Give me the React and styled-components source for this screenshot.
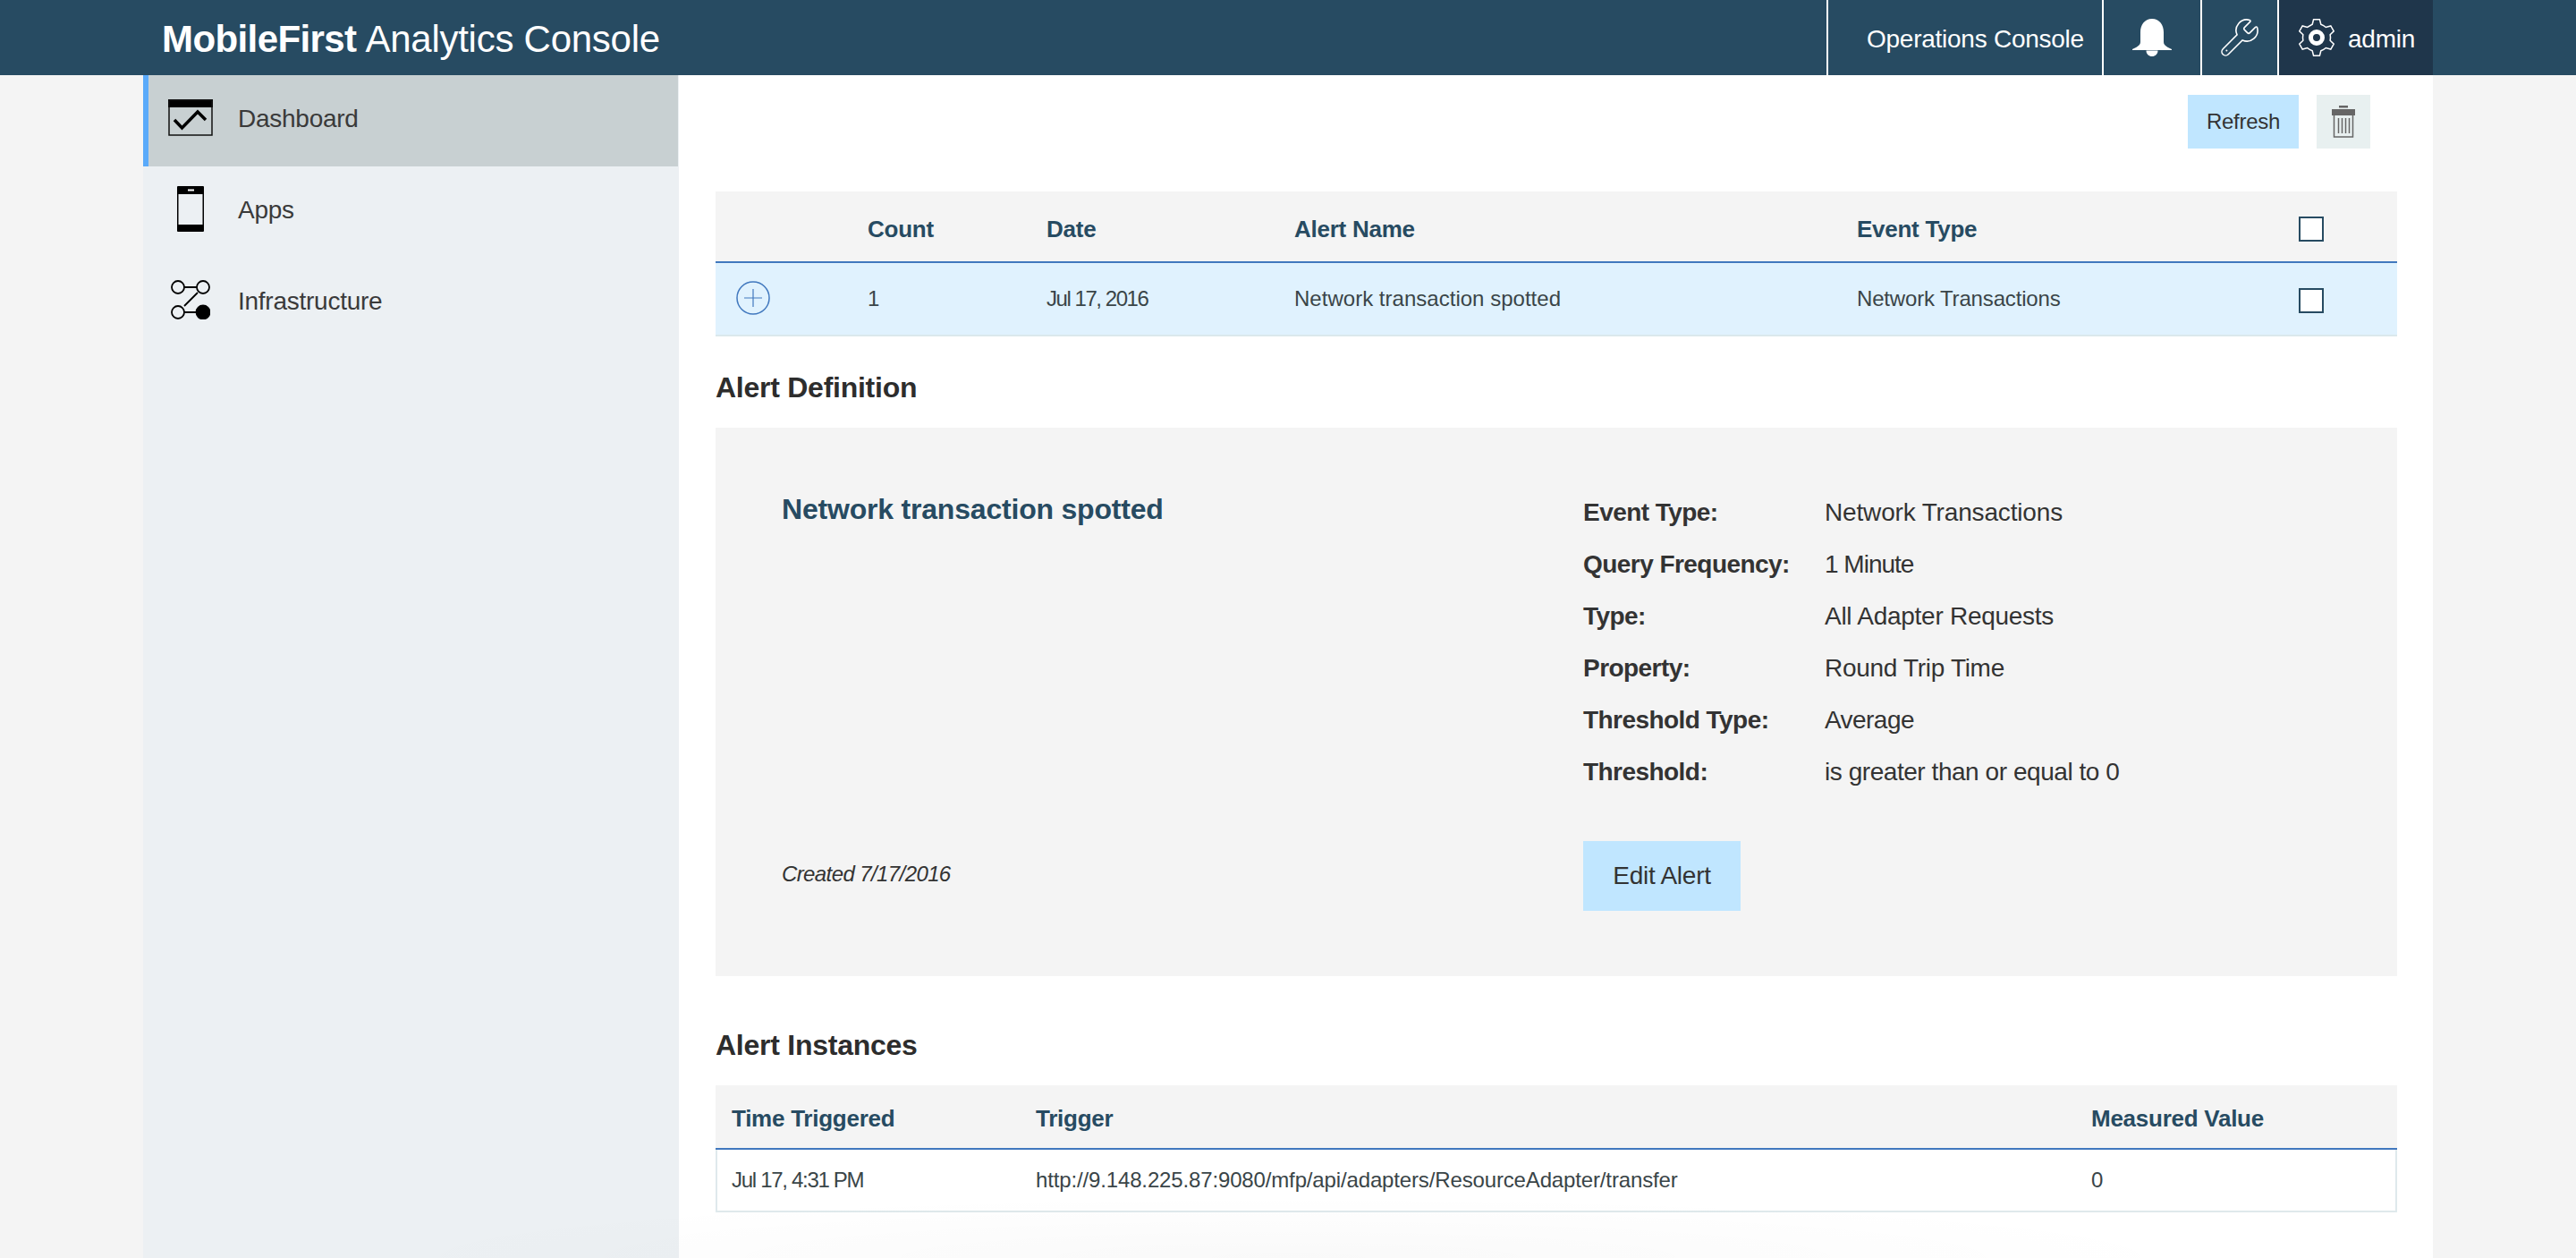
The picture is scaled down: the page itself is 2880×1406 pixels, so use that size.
import React from "react";
import styled, { createGlobalStyle } from "styled-components";

const GlobalStyle = createGlobalStyle`
  html, body { margin: 0; padding: 0; background: #f4f4f4; }
  body {
    font-family: "Liberation Sans", Arial, sans-serif;
    color: #333;
    letter-spacing: -0.256px;
  }
  * { box-sizing: border-box; }
`;

const Page = styled.div`
  height: 1406px;
  overflow: hidden;
  position: relative;
  &::after {
    content: "";
    position: absolute;
    left: 400px;
    right: 400px;
    bottom: 0;
    height: 70px;
    background: radial-gradient(ellipse 1040px 70px at 50% 100%, rgba(0, 0, 0, 0.022), rgba(0, 0, 0, 0));
    pointer-events: none;
  }
`;

const Header = styled.header`
  height: 84px;
  background: #274b62;
`;
const HeaderInner = styled.div`
  width: 2560px;
  height: 100%;
  margin: 0 auto;
  display: flex;
  align-items: stretch;
`;
const Brand = styled.div`
  flex: 1;
  padding: 4px 0 0 21px;
  display: flex;
  align-items: center;
  color: #fff;
  font-size: 42px;
  white-space: pre;
  b { font-weight: 700; letter-spacing: -0.6px; margin-right: 10px; }
`;
const HeaderCell = styled.div`
  display: flex;
  align-items: center;
  justify-content: center;
  border-left: 2px solid #fff;
  color: #fff;
  font-size: 28px;
  width: ${(p) => p.$w}px;
`;
const OpsCell = styled(HeaderCell)`
  justify-content: flex-start;
  padding-left: 43px;
`;
const UserCell = styled(HeaderCell)`
  justify-content: flex-start;
  padding-left: 21px;
  gap: 14px;
  background: #1f364b;
`;
const HeaderText = styled.span`
  margin-top: 4px;
`;

const Shell = styled.div`
  width: 2560px;
  margin: 0 auto;
  display: flex;
  height: 1322px;
  background: #fff;
`;

const Sidebar = styled.nav`
  width: 599px;
  flex-shrink: 0;
  background: #ecf0f3;
`;
const NavItem = styled.div`
  height: 102px;
  margin-right: 1px;
  padding: 0 0 8px 17px;
  display: flex;
  align-items: center;
  font-size: 28px;
  color: #3a3a3a;
  border-left: 6px solid ${(p) => (p.$active ? "#5aaafa" : "transparent")};
  background: ${(p) => (p.$active ? "#c8d0d2" : "transparent")};
`;
const NavIcon = styled.span`
  width: 60px;
  margin-right: 23px;
  display: flex;
  justify-content: center;
`;
const NavLabel = styled.span`
  margin-top: 4px;
`;

const Main = styled.main`
  flex: 1;
  padding: 22px 40px 0 41px;
`;
const Toolbar = styled.div`
  display: flex;
  justify-content: flex-end;
  gap: 20px;
  padding-right: 30px;
  margin-bottom: 48px;
`;
const Button = styled.button`
  border: 0;
  background: #c0e6ff;
  color: #333;
  font-family: inherit;
  letter-spacing: inherit;
  font-size: ${(p) => p.$size || 24}px;
  height: ${(p) => p.$h || 60}px;
  width: ${(p) => p.$w || 124}px;
  padding: 0;
`;
const IconButton = styled(Button)`
  background: #e8f0f0;
  width: 60px;
  display: flex;
  align-items: center;
  justify-content: center;
`;

const AlertRow = styled.div`
  display: grid;
  grid-template-columns: 170px 200px 277px 629px 494px 1fr;
  align-items: center;
  font-size: 24px;
  height: ${(p) => p.$h}px;
`;
const AlertHead = styled(AlertRow)`
  background: #f4f4f4;
  border-bottom: 2px solid #4178be;
  color: #274b62;
  font-weight: 700;
  font-size: 26px;
  padding-top: 6px;
`;
const AlertBody = styled(AlertRow)`
  background: #e0f2fe;
  border-bottom: 2px solid #dbe8ec;
  color: #3a4548;
`;
const Cell = styled.span`
  letter-spacing: ${(p) => p.$track ?? -0.38}px;
`;
const Check = styled.span`
  display: block;
  width: 28px;
  height: 28px;
  background: #fff;
  border: 2px solid #274b62;
`;
const RowCheck = styled(Check)`
  margin-top: 4px;
`;
const PlusCell = styled.span`
  display: flex;
  padding-left: 23px;
  margin-bottom: 2px;
`;

const SectionTitle = styled.h2`
  margin: 0;
  font-size: 32px;
  font-weight: 700;
  color: #2d2d2d;
  line-height: 38px;
  padding-top: ${(p) => p.$top}px;
  padding-bottom: ${(p) => p.$bottom}px;
`;

const Panel = styled.section`
  height: 613px;
  background: #f4f4f4;
  padding: 68px 0 0 74px;
  display: grid;
  grid-template-columns: 896px 1fr;
  grid-template-rows: 394px 78px;
`;
const PanelTitle = styled.h3`
  margin: 0;
  padding-top: 1px;
  font-size: 32px;
  line-height: 44px;
  color: #274b62;
  font-weight: 700;
  letter-spacing: -0.2px;
`;
const Details = styled.dl`
  margin: -2px 0 0;
  display: grid;
  grid-template-columns: 270px 1fr;
  grid-auto-rows: 58px;
  font-size: 28px;
  line-height: 58px;
  color: #333;
  align-content: start;
`;
const DetailLabel = styled.dt`
  font-weight: 700;
  letter-spacing: -0.55px;
`;
const DetailValue = styled.dd`
  margin: 0;
  letter-spacing: ${(p) => p.$track}px;
`;
const Created = styled.div`
  font-size: 24px;
  font-style: italic;
  align-self: center;
  color: #333;
  letter-spacing: -0.6px;
  margin-bottom: 4px;
`;

const InstanceRow = styled.div`
  display: grid;
  grid-template-columns: 340px 1180px 1fr;
  align-items: center;
  padding-left: 18px;
  font-size: 24px;
`;
const InstanceHead = styled(InstanceRow)`
  height: 72px;
  padding-top: 4px;
  background: #f4f4f4;
  border-bottom: 2px solid #4178be;
  color: #274b62;
  font-weight: 700;
  font-size: 26px;
`;
const InstanceBody = styled(InstanceRow)`
  height: 70px;
  padding-left: 16px;
  border: 2px solid #dfe9ec;
  border-top: 0;
  color: #3a4548;
`;

function gearPath(cx, cy, rOut, rIn, teeth) {
  const step = (Math.PI * 2) / teeth;
  let d = "";
  for (let i = 0; i < teeth; i++) {
    const a = -Math.PI / 2 + i * step;
    const pts = [
      [rIn, a - step * 0.3],
      [rOut, a - step * 0.16],
      [rOut, a + step * 0.16],
      [rIn, a + step * 0.3],
    ];
    pts.forEach(([r, t], j) => {
      const x = (cx + r * Math.cos(t)).toFixed(2);
      const y = (cy + r * Math.sin(t)).toFixed(2);
      if (i === 0 && j === 0) d += `M${x} ${y}`;
      else if (j === 0) d += `A${rIn} ${rIn} 0 0 1 ${x} ${y}`;
      else d += `L${x} ${y}`;
    });
  }
  return d + "Z";
}

const BellIcon = () => (
  <svg width="44" height="42" viewBox="0 0 44 42">
    <path
      fill="#fff"
      d="M22 0C13.500 0 9 7 9 15V26C9 30 4 32 0 34V35H44V34C40 32 35 30 35 26V15C35 7 30.500 0 22 0ZM15.500 35.500C15.500 39.500 18.500 42 22 42S28.500 39.500 28.500 35.500Z"
    />
  </svg>
);

const WrenchIcon = () => (
  <svg width="42" height="42" viewBox="1.500 1.500 21 21" fill="none" stroke="#fff" strokeWidth="0.8">
    <path d="M14.700 6.300a1 1 0 0 0 0 1.400l1.600 1.600a1 1 0 0 0 1.400 0l3.106-3.105c.32-.322.863-.22.983.218a6 6 0 0 1-8.259 7.057l-7.910 7.910a1 1 0 0 1-3-3l7.910-7.910a6 6 0 0 1 7.057-8.259c.438.12.54.662.219.984z" />
    <circle cx="4.700" cy="19.300" r="0.500" fill="#fff" stroke="none" />
  </svg>
);

const GearIcon = () => (
  <svg width="42" height="42" viewBox="0 0 42 42">
    <path d={gearPath(21, 21, 20.500, 15.500, 6)} fill="none" stroke="#fff" strokeWidth="1.500" />
    <circle cx="21" cy="21" r="6.500" fill="none" stroke="#fff" strokeWidth="5" />
  </svg>
);

const TrashIcon = () => (
  <svg width="26" height="36" viewBox="0 0 26 36">
    <path fill="#666" d="M8 0H18V2.500H8ZM0 4H26V11H0Z" />
    <path fill="none" stroke="#666" strokeWidth="1.500" d="M2.500 11V35H23.500V11" />
    <path fill="none" stroke="#666" strokeWidth="1.500" d="M7.500 14V31M11.500 14V31M15.500 14V31M19.500 14V31" />
  </svg>
);

const DashboardIcon = () => (
  <svg width="50" height="41" viewBox="0 0 50 41">
    <path d="M0 0H50V9H0Z" fill="#000" />
    <path d="M1 1H49V40H1Z" fill="none" stroke="#111" strokeWidth="1.500" />
    <path d="M7 23L15.500 32L33 14L42 23" fill="none" stroke="#000" strokeWidth="3.500" />
  </svg>
);

const PhoneIcon = () => (
  <svg width="30" height="51" viewBox="0 0 30 51">
    <path fill="#000" fillRule="evenodd" d="M1 0H29A1 1 0 0 1 30 1V50A1 1 0 0 1 29 51H1A1 1 0 0 1 0 50V1A1 1 0 0 1 1 0ZM1.500 9V43H28.500V9Z" />
    <rect x="12" y="3.500" width="7" height="2" fill="#fff" />
  </svg>
);

const NetworkIcon = () => (
  <svg width="44" height="44" viewBox="0 0 44 44" fill="none" stroke="#000" strokeWidth="1.800">
    <circle cx="8" cy="8" r="7" />
    <circle cx="36" cy="8" r="7" />
    <circle cx="8" cy="36" r="7" />
    <circle cx="36" cy="36" r="7.500" fill="#000" />
    <path d="M15 8H29M15 36H29M30 14L15 29" />
  </svg>
);

const PlusIcon = () => (
  <svg width="38" height="38" viewBox="0 0 38 38" fill="none" stroke="#4178be">
    <circle cx="19" cy="19" r="18" strokeWidth="1.500" />
    <path d="M19 9V29M9 19H29" strokeWidth="1.200" />
  </svg>
);

const DETAILS = [
  ["Event Type:", "Network Transactions", -0.16],
  ["Query Frequency:", "1 Minute", -1],
  ["Type:", "All Adapter Requests", -0.27],
  ["Property:", "Round Trip Time", -0.3],
  ["Threshold Type:", "Average", -0.55],
  ["Threshold:", "is greater than or equal to 0", -0.45],
];

export default function App() {
  return (
    <Page>
      <GlobalStyle />
      <Header>
        <HeaderInner>
          <Brand>
            <b>MobileFirst</b>Analytics Console
          </Brand>
          <OpsCell $w={308}><HeaderText>Operations Console</HeaderText></OpsCell>
          <HeaderCell $w={110}><BellIcon /></HeaderCell>
          <HeaderCell $w={86}><WrenchIcon /></HeaderCell>
          <UserCell $w={174}><GearIcon /><HeaderText>admin</HeaderText></UserCell>
        </HeaderInner>
      </Header>
      <Shell>
        <Sidebar>
          <NavItem $active><NavIcon><DashboardIcon /></NavIcon><NavLabel>Dashboard</NavLabel></NavItem>
          <NavItem><NavIcon><PhoneIcon /></NavIcon><NavLabel>Apps</NavLabel></NavItem>
          <NavItem><NavIcon><NetworkIcon /></NavIcon><NavLabel>Infrastructure</NavLabel></NavItem>
        </Sidebar>
        <Main>
          <Toolbar>
            <Button>Refresh</Button>
            <IconButton><TrashIcon /></IconButton>
          </Toolbar>
          <AlertHead $h={80}>
            <span />
            <span>Count</span>
            <span>Date</span>
            <span>Alert Name</span>
            <span>Event Type</span>
            <Check />
          </AlertHead>
          <AlertBody $h={82}>
            <PlusCell><PlusIcon /></PlusCell>
            <Cell>1</Cell>
            <Cell $track={-1.45}>Jul 17, 2016</Cell>
            <Cell $track={0.02}>Network transaction spotted</Cell>
            <Cell $track={-0.16}>Network Transactions</Cell>
            <RowCheck />
          </AlertBody>
          <SectionTitle $top={38} $bottom={26}>Alert Definition</SectionTitle>
          <Panel>
            <PanelTitle>Network transaction spotted</PanelTitle>
            <Details>
              {DETAILS.map(([k, v, track]) => (
                <React.Fragment key={k}>
                  <DetailLabel>{k}</DetailLabel>
                  <DetailValue $track={track}>{v}</DetailValue>
                </React.Fragment>
              ))}
            </Details>
            <Created>Created 7/17/2016</Created>
            <div>
              <Button $size={28} $h={78} $w={176}>Edit Alert</Button>
            </div>
          </Panel>
          <SectionTitle $top={58} $bottom={26}>Alert Instances</SectionTitle>
          <InstanceHead>
            <span>Time Triggered</span>
            <span>Trigger</span>
            <span>Measured Value</span>
          </InstanceHead>
          <InstanceBody>
            <Cell $track={-1.3}>Jul 17, 4:31 PM</Cell>
            <Cell $track={-0.145}>http://9.148.225.87:9080/mfp/api/adapters/ResourceAdapter/transfer</Cell>
            <Cell>0</Cell>
          </InstanceBody>
        </Main>
      </Shell>
    </Page>
  );
}
